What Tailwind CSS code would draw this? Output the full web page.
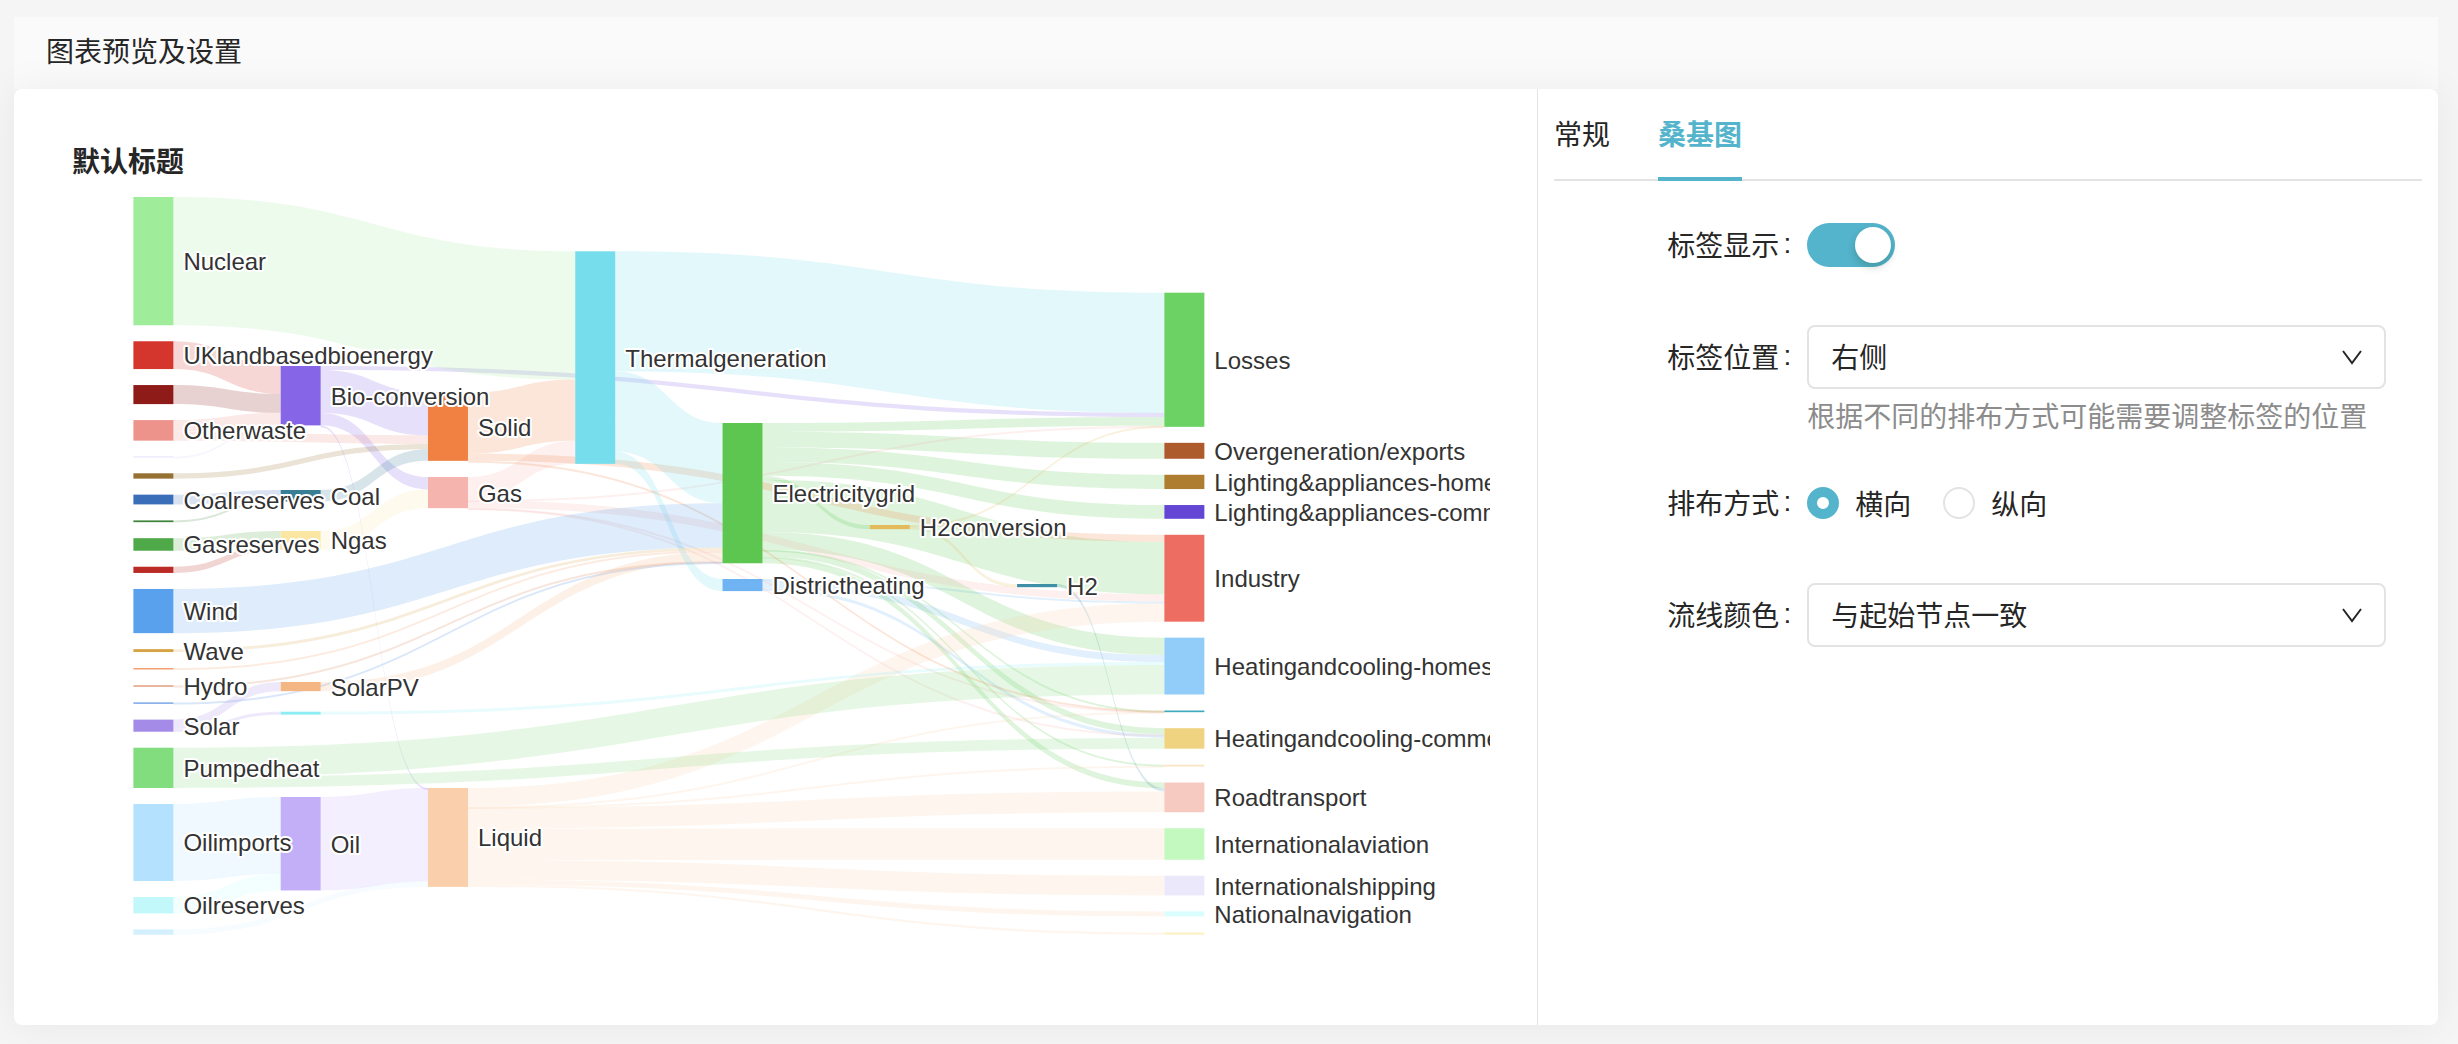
<!DOCTYPE html>
<html lang="zh-CN">
<head>
<meta charset="utf-8">
<meta name="viewport" content="width=device-width, initial-scale=1">
<title>图表预览及设置</title>
<script src="https://cdn.jsdelivr.net/npm/@tailwindcss/browser@4"></script>
</head>
<body class="min-h-screen bg-[#f5f5f5] pt-[17px] pr-5 pb-[19px] pl-[14px] font-['Noto_Sans_CJK_SC',sans-serif] text-[28px] text-[#262626]">
<main>
  <header class="flex h-[72px] items-center bg-[#fafafa] px-8 pb-[6px]">
    <h1 class="leading-10">图表预览及设置</h1>
  </header>
  <div class="grid grid-cols-[1523fr_901fr] rounded-lg bg-white shadow-[0_0_40px_rgba(0,0,0,0.06)]">
    <section class="py-12 pr-[47px] pl-12">
      <h2 class="px-[10px] leading-[46px] font-bold">默认标题</h2>
      <svg id="sankey" class="block w-full" viewBox="62 183 1428 794" role="img" aria-label="桑基图">
        <g id="links" fill-opacity="0.2"></g>
        <g id="nodes"></g>
        <g id="labels" class="fill-[#333] stroke-white stroke-4 font-['Liberation_Sans',sans-serif] text-2xl [paint-order:stroke] [stroke-linejoin:round]"></g>
      </svg>
    </section>
    <section class="border-l border-[#e3e3e3] px-4">
      <nav class="flex h-[92px] gap-12 border-b-2 border-[#e3e3e3]">
        <button type="button" class="-mb-[2px] border-b-4 border-transparent">常规</button>
        <button type="button" class="-mb-[2px] border-b-4 border-[#54b4cb] font-bold text-[#54b4cb]">桑基图</button>
      </nav>
      <form class="pt-8">
        <div class="mb-12 grid h-16 grid-cols-24 items-start">
          <label for="show" class="col-span-7 flex justify-end leading-[62px]">标签显示<span class="mr-4 ml-1 font-['Liberation_Sans',sans-serif]">:</span></label>
          <div class="col-span-16 flex h-16 items-center">
            <input id="show" type="checkbox" role="switch" checked class="block h-11 w-[88px] appearance-none rounded-full bg-[#bfbfbf] p-1 before:block before:size-9 before:rounded-full before:bg-white before:shadow-[0_4px_8px_rgba(0,35,11,0.2)] checked:bg-[#54b4cb] checked:before:ml-11">
          </div>
        </div>
        <div class="mb-9 grid grid-cols-24 items-start">
          <label for="position" class="col-span-7 flex justify-end leading-[62px]">标签位置<span class="mr-4 ml-1 font-['Liberation_Sans',sans-serif]">:</span></label>
          <div class="col-span-16">
            <div class="relative">
              <select id="position" class="block h-16 w-full appearance-none rounded-lg border-2 border-[#e3e3e3] bg-white px-[22px] pb-[2px]"><option>右侧</option><option>左侧</option></select>
              <svg class="pointer-events-none absolute top-[22px] right-6 size-5" viewBox="0 0 20 20" fill="none" stroke="#262626" stroke-width="2"><path d="M1 4 L10 16 L19 4"/></svg>
            </div>
            <p class="mt-[6px] leading-10 whitespace-nowrap text-[#8c8c8c]">根据不同的排布方式可能需要调整标签的位置</p>
          </div>
        </div>
        <div class="mb-12 grid h-16 grid-cols-24 items-start" role="radiogroup" aria-labelledby="direction">
          <span id="direction" class="col-span-7 flex justify-end leading-[62px]">排布方式<span class="mr-4 ml-1 font-['Liberation_Sans',sans-serif]">:</span></span>
          <div class="col-span-16 flex h-16 gap-8">
            <label class="flex items-center gap-4"><input type="radio" name="direction" checked class="size-8 appearance-none rounded-full border-2 border-[#e3e3e3] bg-white checked:border-10 checked:border-[#54b4cb]">横向</label>
            <label class="flex items-center gap-4"><input type="radio" name="direction" class="size-8 appearance-none rounded-full border-2 border-[#e3e3e3] bg-white checked:border-10 checked:border-[#54b4cb]">纵向</label>
          </div>
        </div>
        <div class="grid grid-cols-24 items-start">
          <label for="color" class="col-span-7 flex justify-end leading-[62px]">流线颜色<span class="mr-4 ml-1 font-['Liberation_Sans',sans-serif]">:</span></label>
          <div class="relative col-span-16">
            <select id="color" class="block h-16 w-full appearance-none rounded-lg border-2 border-[#e3e3e3] bg-white px-[22px] pb-[2px]"><option>与起始节点一致</option><option>与目标节点一致</option></select>
            <svg class="pointer-events-none absolute top-[22px] right-6 size-5" viewBox="0 0 20 20" fill="none" stroke="#262626" stroke-width="2"><path d="M1 4 L10 16 L19 4"/></svg>
          </div>
        </div>
      </form>
    </section>
  </div>
</main>
<script>
// Node: [key, column, top, colour, label]. A null top stacks the node below the previous one.
const NODES = [
  ['nuclear', 0, 197, '#9fec9b', 'Nuclear'],
  ['ukland', 0, null, '#d4352c', 'UKlandbasedbioenergy'],
  ['agriwaste', 0, null, '#8e1b18'],
  ['otherwaste', 0, null, '#ed938b', 'Otherwaste'],
  ['algae', 0, null, '#d9d0fa'],
  ['biomass', 0, null, '#957234'],
  ['coalreserves', 0, null, '#3a6eb9', 'Coalreserves'],
  ['coalimports', 0, null, '#3f843c'],
  ['gasreserves', 0, null, '#50a948', 'Gasreserves'],
  ['gasimports', 0, null, '#ba2b25'],
  ['wind', 0, null, '#5aa1ed', 'Wind'],
  ['wave', 0, null, '#d6a344', 'Wave'],
  ['tidal', 0, null, '#f39c6b'],
  ['hydro', 0, null, '#d9794b', 'Hydro'],
  ['geothermal', 0, null, '#4785e0'],
  ['solar', 0, null, '#a58be8', 'Solar'],
  ['pumped', 0, null, '#82dd7e', 'Pumpedheat'],
  ['oilimports', 0, null, '#b4e1fd', 'Oilimports'],
  ['oilreserves', 0, null, '#c2f8fa', 'Oilreserves'],
  ['biofuel', 0, null, '#d4effd'],
  ['bio', 1, 366, '#8666e6', 'Bio-conversion'],
  ['coal', 1, 490, '#387f96', 'Coal'],
  ['ngas', 1, 531, '#fce6a4', 'Ngas'],
  ['solarpv', 1, 682, '#f4b683', 'SolarPV'],
  ['solarthermal', 1, 711.7, '#8eecf4'],
  ['oil', 1, 797, '#c3aff8', 'Oil'],
  ['solid', 2, 392.5, '#f18143', 'Solid'],
  ['gas', 2, 477, '#f5b4ae', 'Gas'],
  ['liquid', 2, 788, '#f9d0ab', 'Liquid'],
  ['thermal', 3, 251.3, '#75ddec', 'Thermalgeneration'],
  ['grid', 4, 423, '#5cc650', 'Electricitygrid'],
  ['district', 4, 579, '#6fb3f3', 'Districtheating'],
  ['h2conv', 5, 525, '#e4bb5b', 'H2conversion'],
  ['h2', 6, 584, '#3f8fa7', 'H2'],
  ['losses', 7, 292.7, '#6bd263', 'Losses'],
  ['over', 7, null, '#ad5a2c', 'Overgeneration/exports'],
  ['lighthomes', 7, null, '#ae7d30', 'Lighting&appliances-homes'],
  ['lightcomm', 7, null, '#6446d5', 'Lighting&appliances-commercial'],
  ['industry', 7, null, '#ed6d63', 'Industry'],
  ['heathomes', 7, null, '#92cdf9', 'Heatingandcooling-homes'],
  ['agriculture', 7, null, '#3fa9bd'],
  ['heatcomm', 7, null, '#f0d381', 'Heatingandcooling-commercial'],
  ['rail', 7, null, '#fbe5c5'],
  ['road', 7, null, '#f6cac0', 'Roadtransport'],
  ['intlaviation', 7, null, '#c3f8be', 'Internationalaviation'],
  ['shipping', 7, null, '#ece8fc', 'Internationalshipping'],
  ['navigation', 7, null, '#dafefe', 'Nationalnavigation'],
  ['domaviation', 7, null, '#fdf2c4']
];
const LINKS = [
  ['agriwaste', 'bio', 124.729], ['bio', 'liquid', 0.597], ['bio', 'losses', 26.862],
  ['bio', 'solid', 280.322], ['bio', 'gas', 81.144], ['biofuel', 'liquid', 35],
  ['biomass', 'solid', 35], ['coalimports', 'coal', 11.606], ['coalreserves', 'coal', 63.965],
  ['coal', 'solid', 75.571], ['district', 'industry', 10.639], ['district', 'heatcomm', 22.505],
  ['district', 'heathomes', 46.184], ['grid', 'over', 104.453], ['grid', 'heathomes', 113.726],
  ['grid', 'h2conv', 27.14], ['grid', 'industry', 342.165], ['grid', 'road', 37.797],
  ['grid', 'agriculture', 4.412], ['grid', 'heatcomm', 40.858], ['grid', 'losses', 56.691],
  ['grid', 'rail', 7.863], ['grid', 'lightcomm', 90.008], ['grid', 'lighthomes', 93.494],
  ['gasimports', 'ngas', 40.719], ['gasreserves', 'ngas', 82.233], ['gas', 'heatcomm', 0.129],
  ['gas', 'losses', 1.401], ['gas', 'thermal', 151.891], ['gas', 'agriculture', 2.096],
  ['gas', 'industry', 48.58], ['geothermal', 'grid', 7.013], ['h2conv', 'h2', 20.897],
  ['h2conv', 'losses', 6.242], ['h2', 'road', 20.897], ['hydro', 'grid', 6.995],
  ['liquid', 'industry', 121.066], ['liquid', 'shipping', 128.69], ['liquid', 'road', 135.835],
  ['liquid', 'domaviation', 14.458], ['liquid', 'intlaviation', 206.267], ['liquid', 'agriculture', 3.64],
  ['liquid', 'navigation', 33.218], ['liquid', 'rail', 4.413], ['algae', 'bio', 4.375],
  ['ngas', 'gas', 122.952], ['nuclear', 'thermal', 839.978], ['oilimports', 'oil', 504.287],
  ['oilreserves', 'oil', 107.703], ['oil', 'liquid', 611.99], ['otherwaste', 'solid', 56.587],
  ['otherwaste', 'bio', 77.81], ['pumped', 'heathomes', 193.026], ['pumped', 'heatcomm', 70.672],
  ['solarthermal', 'heathomes', 19.263], ['solar', 'solarthermal', 19.263], ['solarpv', 'grid', 59.901],
  ['solar', 'solarpv', 59.901], ['solid', 'agriculture', 0.882], ['solid', 'thermal', 400.12],
  ['solid', 'industry', 46.477], ['thermal', 'grid', 525.531], ['thermal', 'losses', 787.129],
  ['thermal', 'district', 79.329], ['tidal', 'grid', 9.452], ['ukland', 'bio', 182.01],
  ['wave', 'grid', 19.013], ['wind', 'grid', 289.366]
];
const SCALE = 0.1527, GAP = 16, BAR = 40, LEFT = 133.4, STEP = 147.28;
const SVG = 'http://www.w3.org/2000/svg';
const add = (parent, tag, attrs, text) => {
  const el = document.createElementNS(SVG, tag);
  for (const k in attrs) el.setAttribute(k, attrs[k]);
  if (text) el.textContent = text;
  document.getElementById(parent).appendChild(el);
};
const sum = list => list.reduce((t, l) => t + l.v, 0);
const links = LINKS.map(([s, t, v]) => ({ s, t, v }));
const byKey = {};
let bottom = 0;
for (const [key, col, top, color, label] of NODES) {
  const outs = links.filter(l => l.s === key), ins = links.filter(l => l.t === key);
  const h = Math.max(sum(outs), sum(ins)) * SCALE;
  const y = top === null ? bottom + GAP : top;
  bottom = y + h;
  byKey[key] = { x: LEFT + col * STEP, y, h, color, label, outs, ins };
}
for (const n of Object.values(byKey)) {
  let o = n.y, i = n.y;
  n.outs.sort((a, b) => byKey[a.t].y - byKey[b.t].y).forEach(l => { l.y1 = o; o += l.v * SCALE; });
  n.ins.sort((a, b) => byKey[a.s].y - byKey[b.s].y).forEach(l => { l.y2 = i; i += l.v * SCALE; });
}
// Thin flows keep a minimum width so that they stay visible.
for (const l of links) {
  const s = byKey[l.s], t = byKey[l.t], w = Math.max(2, l.v * SCALE);
  const a = s.x + BAR, b = t.x, m = (a + b) / 2;
  add('links', 'path', {
    d: `M${a} ${l.y1}C${m} ${l.y1} ${m} ${l.y2} ${b} ${l.y2}V${l.y2 + w}C${m} ${l.y2 + w} ${m} ${l.y1 + w} ${a} ${l.y1 + w}Z`,
    fill: s.color
  });
}
for (const n of Object.values(byKey)) {
  add('nodes', 'rect', { x: n.x, y: n.y, width: BAR, height: n.h, fill: n.color });
  if (n.label) add('labels', 'text', { x: n.x + BAR + 10, y: n.y + n.h / 2 + 9 }, n.label);
}
</script>
</body>
</html>
